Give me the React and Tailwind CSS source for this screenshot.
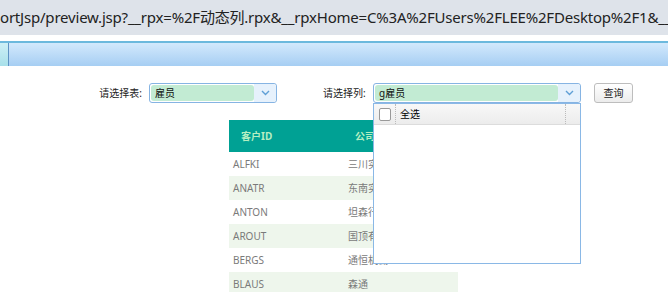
import React from "react";

const rows = [
  { id: "ALFKI", name: "三川实业有限公司" },
  { id: "ANATR", name: "东南实业" },
  { id: "ANTON", name: "坦森行贸易" },
  { id: "AROUT", name: "国顶有限公司" },
  { id: "BERGS", name: "通恒机械" },
  { id: "BLAUS", name: "森通" },
];

const font = { fontFamily: '"Noto Sans", "Noto Sans CJK SC", sans-serif' };

function Chevron() {
  return (
    <svg width="9" height="6" viewBox="0 0 9 6">
      <path d="M1 1 L4.5 4.5 L8 1" fill="none" stroke="#5f9fd6" strokeWidth="1.4" />
    </svg>
  );
}

function Combo({ value, width, children }) {
  return (
    <div className={`relative h-[20px] ${width} flex border border-[#86b4e3] rounded-[3px] bg-white`}>
      <div className="flex-1 m-[1px] mr-0 bg-[#c2ebd3] rounded-[3px] flex items-center pl-[4px] text-[10px] text-[#111]">
        {value}
      </div>
      <div className="w-[22px] bg-[#e6f1fc] flex items-center justify-center rounded-r-[3px]">
        <Chevron />
      </div>
      {children}
    </div>
  );
}

export default function App() {
  return (
    <div className="w-[668px] h-[292px] overflow-hidden bg-white relative" style={font}>
      {/* adresssor */}
      <div className="h-[35px] bg-[#dee3ea] flex items-center overflow-hidden whitespace-nowrap text-[15px] text-[#222] tracking-[-0.2px]">
        ortJsp/preview.jsp?__rpx=%2F动态列.rpx&amp;__rpxHome=C%3A%2FUsers%2FLEE%2FDesktop%2F1&amp;__sp
      </div>
      <div className="h-[6px]" />

      {/* kék sáv */}
      <div className="h-[25px] border-t-2 border-[#6cb9dd] bg-gradient-to-b from-[#d3e9fc] to-[#a6cef3] flex">
        <div className="w-[9px] bg-gradient-to-b from-[#cdf0f6] to-[#a8e0ea] border-r border-[#5d93c3]" />
      </div>

      {/* szűrők */}
      <div className="mt-[17px] flex items-center h-[20px] text-[10px] text-[#222]">
        <div className="w-[143px] text-right pr-[1px]">请选择表:</div>
        <div className="ml-[6px]">
          <Combo value="雇员" width="w-[128px]" />
        </div>
        <div className="ml-[46px] w-[44px]">请选择列:</div>
        <div className="ml-[6px]">
          <Combo value="g雇员" width="w-[208px]">
            <div className="absolute left-[-1px] top-[19px] w-[208px] h-[161px] border border-[#8ab8e6] bg-white z-10">
              <div className="h-[21px] flex items-center bg-gradient-to-b from-[#f8f8f8] to-[#ececec] border-b border-[#dcdcdc]">
                <div className="w-[22px] flex justify-center border-r border-dotted border-[#bbb] h-full items-center">
                  <div className="w-[12px] h-[13px] border border-[#999] rounded-[2px] bg-white" />
                </div>
                <div className="flex-1 pl-[4px] text-[10px] text-black border-r border-dotted border-[#bbb] h-full flex items-center">全选</div>
                <div className="w-[14px]" />
              </div>
            </div>
          </Combo>
        </div>
        <button className="ml-[13px] w-[39px] h-[20px] border border-[#bdbdbd] rounded-[3px] bg-gradient-to-b from-white to-[#ececec] text-[10px] text-[#222]">
          查询
        </button>
      </div>

      {/* tábla */}
      <div className="mt-[17px] ml-[229px] w-[229px] text-[10px]">
        <div className="h-[32px] bg-[#00a194] flex items-center font-bold text-[#b6eec2]">
          <div className="w-[115px] pl-[12px]">客户ID</div>
          <div className="pl-[11px]">公司名称</div>
        </div>
        {rows.map((r, i) => (
          <div key={r.id} className={`h-[24px] flex items-center text-[#7a7a7a] ${i % 2 === 1 ? "bg-[#eef6ec]" : "bg-white"}`}>
            <div className="w-[115px] pl-[4px]">{r.id}</div>
            <div className="pl-[4px]">{r.name}</div>
          </div>
        ))}
      </div>
    </div>
  );
}
